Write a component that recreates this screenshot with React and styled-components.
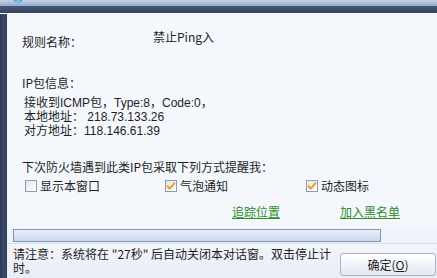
import React from 'react';
import styled, { createGlobalStyle } from 'styled-components';

const GlobalStyle = createGlobalStyle`
	html, body {
		margin: 0;
		padding: 0;
		background: #f4f8fd;
	}
	body {
		font-family: "Noto Sans CJK SC", "Noto Sans", sans-serif;
		font-size: 12px;
		line-height: 14px;
		color: #1e1e1e;
	}
`;

function CheckBox({ checked }) {
	return (
		<svg width="12" height="12" viewBox="0 0 12 12">
			<defs>
				<linearGradient id={checked ? 'cbOn' : 'cbOff'} x1="0" y1="0" x2="1" y2="1">
					<stop offset="0" stopColor="#dfe5ee" />
					<stop offset="1" stopColor="#ffffff" />
				</linearGradient>
			</defs>
			<rect
				x="0.5"
				y="0.5"
				width="11"
				height="11"
				fill={`url(#${checked ? 'cbOn' : 'cbOff'})`}
				stroke="#8d9db5"
			/>
			{checked && (
				<path
					d="M2.6 6.2 L4.8 8.6 L9.4 3.2"
					fill="none"
					stroke="#f0a018"
					strokeWidth="2"
					strokeLinecap="round"
					strokeLinejoin="round"
				/>
			)}
		</svg>
	);
}

function App() {
	return (
		<>
			<GlobalStyle />
			<Window>
				<TitleStrip>
					<AppIcon />
				</TitleStrip>
				<DarkBand />
				<Body>
					<Rail />
					<Main>
						<Content>
							<RuleRow>
								<RuleLabel>规则名称：</RuleLabel>
								<span>禁止Ping入</span>
							</RuleRow>
							<Heading $top={27}>IP包信息：</Heading>
							<Details>
								<div>接收到ICMP包，Type:8，Code:0，</div>
								<div>本地地址： 218.73.133.26</div>
								<div>对方地址：118.146.61.39</div>
							</Details>
							<Heading $top={22}>下次防火墙遇到此类IP包采取下列方式提醒我：</Heading>
							<Options>
								<Option>
									<CheckBox />
									显示本窗口
								</Option>
								<Option>
									<CheckBox checked />
									气泡通知
								</Option>
								<Option>
									<CheckBox checked />
									动态图标
								</Option>
							</Options>
							<Links>
								<Link href="#">追踪位置</Link>
								<Link href="#">加入黑名单</Link>
							</Links>
						</Content>
						<ProgressRow>
							<ProgressBar />
						</ProgressRow>
						<Footer>
							<Notice>请注意：系统将在 "27秒" 后自动关闭本对话窗。双击停止计时。</Notice>
							<OkButton>
								确定(<u>O</u>)
							</OkButton>
						</Footer>
					</Main>
				</Body>
			</Window>
		</>
	);
}

const Window = styled.div`
	width: 437px;
	height: 278px;
	overflow: hidden;
	display: flex;
	flex-direction: column;
	background: #f4f8fd;
`;
const TitleStrip = styled.div`
	height: 6px;
	flex-shrink: 0;
	overflow: hidden;
	padding-left: 13px;
	background: linear-gradient(#c6d1e3, #96a9c8);
`;
const AppIcon = styled.div`
	width: 10px;
	height: 10px;
	margin-top: -7px;
	border-radius: 50%;
	background: radial-gradient(circle at 50% 80%, #7fc8e8, #2a6d9c);
`;
const DarkBand = styled.div`
	height: 7px;
	flex-shrink: 0;
	background: linear-gradient(#45577a, #34445f);
	border-bottom: 1px solid #ffffff;
`;
const Body = styled.div`
	flex: 1;
	display: flex;
	min-height: 0;
`;
const Rail = styled.div`
	width: 7px;
	flex-shrink: 0;
	background: linear-gradient(90deg, #2c3a54, #3b4b69 60%, #2f3d58);
`;
const Main = styled.div`
	flex: 1;
	display: flex;
	flex-direction: column;
	background: #f4f8fd;
`;
const Content = styled.div`
	padding: 16px 0 0 15px;
	height: 205px;
	box-sizing: border-box;
`;
const RuleRow = styled.div`
	display: flex;
	align-items: flex-start;
	height: 19px;
`;
const RuleLabel = styled.span`
	width: 131px;
	margin-top: 5px;
`;
const Heading = styled.div`
	margin-top: ${(p) => p.$top}px;
`;
const Details = styled.div`
	margin-top: 6px;
	padding-left: 2px;
	font-family: "Liberation Sans", "Noto Sans CJK SC", sans-serif;
	line-height: 14px;
`;
const Options = styled.div`
	display: grid;
	grid-template-columns: 140px 141px auto;
	margin-top: 5px;
	padding-left: 3px;
`;
const Option = styled.label`
	display: flex;
	align-items: center;
	gap: 3px;
	svg {
		flex-shrink: 0;
	}
`;
const Links = styled.div`
	display: flex;
	gap: 60px;
	margin-top: 12px;
	padding-left: 210px;
`;
const Link = styled.a`
	color: #2f8c1f;
	text-decoration: underline;
`;
const ProgressRow = styled.div`
	height: 14px;
	margin-top: 10px;
	padding-left: 6px;
	background: #eef3fa;
	border-bottom: 1px solid #d8e0ec;
`;
const ProgressBar = styled.div`
	width: 368px;
	height: 13px;
	box-sizing: border-box;
	border: 1px solid #8495b2;
	background: linear-gradient(#e9f0fa, #c9d8ef);
`;
const Footer = styled.div`
	flex: 1;
	display: flex;
	align-items: flex-start;
	padding: 3px 1px 0 6px;
	background: linear-gradient(#f2f5fa, #e8eef6);
`;
const Notice = styled.div`
	width: 327px;
	flex-shrink: 0;
`;
const OkButton = styled.button`
	margin-left: auto;
	margin-top: 6px;
	width: 96px;
	height: 23px;
	border: 1px solid #a9b4c4;
	border-radius: 3px;
	background: linear-gradient(#ffffff, #e2e9f3);
	font-family: inherit;
	font-size: 12px;
	color: #1e1e1e;
	padding: 0;
	u {
		text-decoration: underline;
	}
`;

export default App;
